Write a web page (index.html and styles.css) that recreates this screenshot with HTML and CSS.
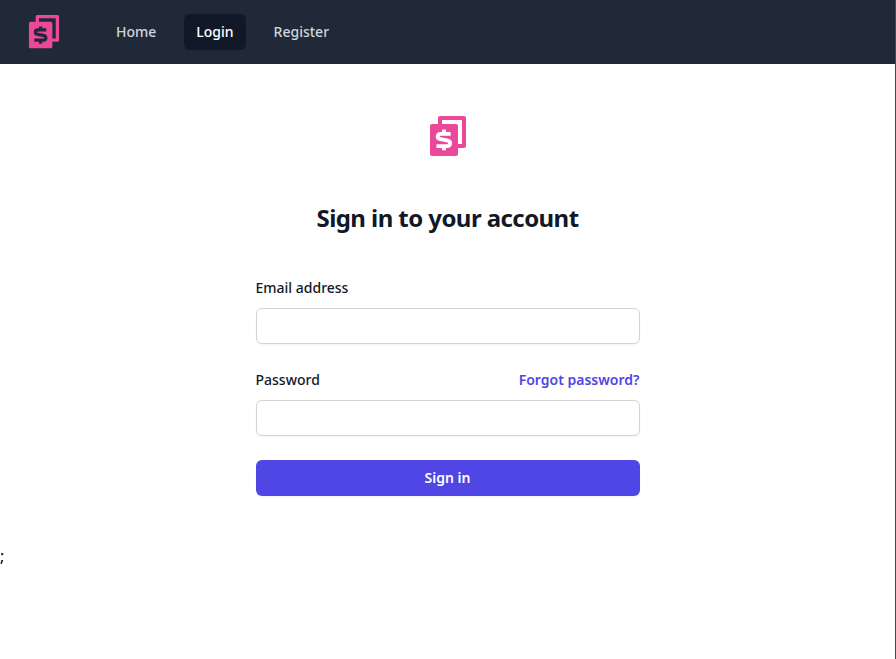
FILE: index.html
```html
<!DOCTYPE html>
<html lang="en">
<head>
<meta charset="utf-8">
<title>Sign in</title>
<link rel="stylesheet" href="styles.css">
</head>
<body>
<svg class="defs" aria-hidden="true"><symbol id="logo" viewBox="0 0 36 40">
<path fill="currentColor" fill-rule="evenodd" d="M2 8H8V2Q8 0 10 0H34Q36 0 36 2V30Q36 32 34 32H28V38Q28 40 26 40H2Q0 40 0 38V10Q0 8 2 8ZM12 4V8H26Q28 8 28 10V28H32V4Z"/>
<path class="cutout" d="M20.700 17.900H11C6.700 17.900 6.700 22.600 10.500 23.100L17 24.400C21.400 25.200 21.200 30.100 16.800 30.100H6.500M14 13.600V18M14 30V34.200"/>
</symbol></svg>
<header class="nav">
<svg class="nav-logo"><use href="#logo"/></svg>
<nav class="links"><a href="#">Home</a><a href="#" class="active">Login</a><a href="#">Register</a></nav>
</header>
<main class="login">
<svg class="logo"><use href="#logo"/></svg>
<h1>Sign in to your account</h1>
<form>
<label for="email">Email address</label>
<input id="email" type="email">
<div class="row"><label for="password">Password</label><a href="#">Forgot password?</a></div>
<input id="password" type="password">
<button type="button">Sign in</button>
</form>
</main>
<div class="stray">;</div>
</body>
</html>
```
FILE: styles.css
```css
* { box-sizing: border-box; }
body { margin: 0; min-height: 659px; border-right: 1px solid #454749; background: #fff; color: #000; font: 16px/24px "Noto Sans", sans-serif; }
a { text-decoration: none; }
.defs { position: absolute; width: 0; height: 0; }
.cutout { fill: none; stroke: var(--logo-bg); stroke-width: 3.9; }
.nav { display: flex; align-items: center; height: 64px; padding-left: 28px; background: #1f2937; }
.nav-logo { display: block; width: 32px; height: 33.500px; color: #ec4899; --logo-bg: #1f2937; }
.links { display: flex; gap: 16px; margin-left: 44px; }
.links a { padding: 8px 12px; border-radius: 6px; color: #d1d5db; font-size: 14px; line-height: 20px; font-weight: 500; }
.links .active { background: #111827; color: #fff; }
.login { width: 384px; margin: 0 auto; padding: 52px 0 48px; color: #111827; }
.logo { display: block; width: 36px; height: 40px; margin: 0 auto; color: #ec4899; --logo-bg: #fff; }
h1 { margin: 44px 0 40px; text-align: center; font-size: 24px; line-height: 36px; font-weight: 700; letter-spacing: -0.57px; }
form { font-size: 14px; line-height: 24px; font-weight: 500; }
label { display: block; }
input { display: block; width: 100%; height: 36px; margin: 8px 0 24px; padding: 6px 12px; border: 1px solid #d1d5db; border-radius: 6px; background: #fff; box-shadow: 0 1px 2px rgba(0,0,0,.05); }
.row { display: flex; justify-content: space-between; }
.row a { color: #4f46e5; font-weight: 600; }
button { display: block; width: 100%; height: 36px; border: 0; border-radius: 6px; background: #4f46e5; color: #fff; font: 600 14px/24px "Noto Sans", sans-serif; box-shadow: 0 1px 2px rgba(0,0,0,.05); }
```
